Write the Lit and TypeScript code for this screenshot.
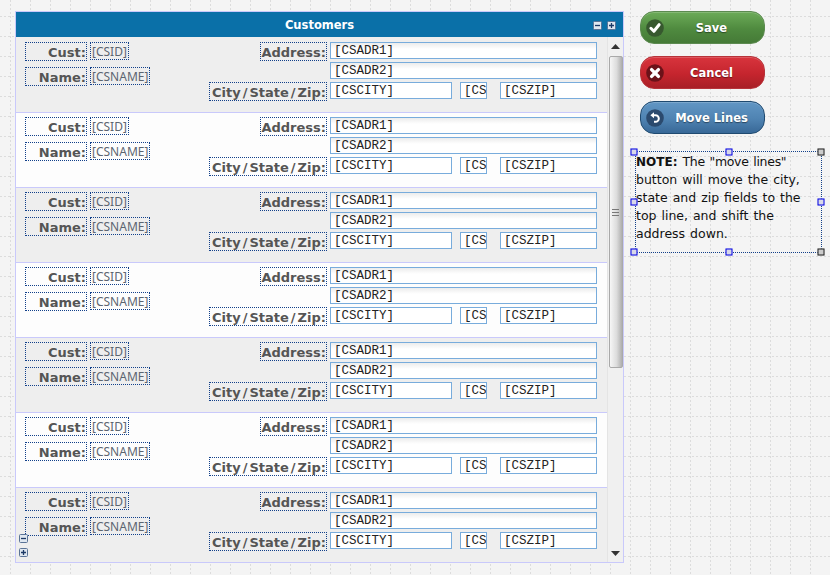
import { LitElement, html, css, svg } from "lit";
import { customElement } from "lit/decorators.js";

const pm = (plus: boolean) => svg`<svg width="9" height="9" viewBox="0 0 9 9"><rect x=".5" y=".5" width="8" height="8" rx="1" fill="#dfe7f0" stroke="#5a7396"/><path d="M2 4.5h5${plus ? "M4.5 2v5" : ""}" stroke="#1d3a66" stroke-width="1.3" fill="none"/></svg>`;

const check = svg`<svg viewBox="0 0 18 18" width="18" height="18"><circle cx="9" cy="9" r="8.8" fill="#37582f"/><path d="M4.9 9.3l3 3 5.2-6.6" fill="none" stroke="#fff" stroke-width="3" stroke-linecap="round" stroke-linejoin="round"/></svg>`;
const cross = svg`<svg viewBox="0 0 18 18" width="18" height="18"><circle cx="9" cy="9" r="8.8" fill="#6b1219"/><path d="M5.6 5.6l6.8 6.8M12.4 5.6l-6.8 6.8" fill="none" stroke="#fff" stroke-width="3.4" stroke-linecap="round"/></svg>`;
const undo = svg`<svg viewBox="0 0 18 18" width="18" height="18"><circle cx="9" cy="9" r="8.8" fill="#2b4a6e"/><path d="M7.5 6.2h2a3.2 3.2 0 0 1 0 6.6H8" fill="none" stroke="#fff" stroke-width="2"/><path d="M8 3.2v6L4.4 6.2z" fill="#fff"/></svg>`;

@customElement("app-root")
export class AppRoot extends LitElement {
  static styles = css`
    :host {
      display: flex;
      align-items: flex-start;
      width: 830px;
      height: 575px;
      box-sizing: border-box;
      padding: 11px 0 0 15px;
      overflow: hidden;
      background-color: #f4f4f4;
      background-image: url("data:image/svg+xml,%3Csvg xmlns='http://www.w3.org/2000/svg' width='20' height='20'%3E%3Cpath d='M10.5 0v20M0 16.5h20' stroke='%23dcdcdc' stroke-dasharray='2 2' fill='none'/%3E%3C/svg%3E");
      font-family: "DejaVu Sans", sans-serif;
    }
    .panel {
      position: relative;
      width: 609px;
      height: 552px;
      box-sizing: border-box;
      border: 1px solid #c9c9fb;
      display: flex;
      flex-direction: column;
      flex: none;
    }
    .title {
      height: 25px;
      flex: none;
      background: #0a70a8;
      color: #fff;
      font: bold 11.5px/26px "DejaVu Sans", sans-serif;
      text-align: center;
      position: relative;
    }
    .tools {
      position: absolute;
      right: 7px;
      top: 9px;
      display: flex;
      gap: 5px;
    }
    .tools svg, .tree svg { display: block; }
    .body { flex: 1; display: flex; min-height: 0; background: #eee; }
    .rows { flex: 1; min-width: 0; padding-top: 1px; overflow: hidden; }
    .row {
      height: 75px;
      box-sizing: border-box;
      border-bottom: 1px solid #c9c9fb;
      background: #fdfdfd;
      padding: 4px 10px 0 9px;
      display: flex;
      justify-content: space-between;
    }
    .row:nth-child(odd) { background: #eeeeee; }
    .row:last-child { border-bottom: 0; }
    .left { display: grid; grid-template-columns: 62px auto; grid-auto-rows: 19px; column-gap: 3px; row-gap: 6px; align-content: start; justify-items: start; }
    .right { display: grid; grid-template-columns: auto 267px; grid-auto-rows: 17px; column-gap: 3px; row-gap: 3px; align-content: start; justify-items: end; }
    .lab {
      box-sizing: border-box;
      height: 19px;
      border: 1px dotted #12408a;
      color: #555;
      font: bold 13px/19px "DejaVu Sans", sans-serif;
      text-align: right;
      padding: 0;
      white-space: nowrap;
    }
    .lab.city { padding-left: 2px; }
    .left .lab { width: 62px; }
    .sl { margin: 0 2px; }
    .val {
      box-sizing: border-box;
      height: 18px;
      border: 1px dotted #12408a;
      color: #5c6570;
      font: 12px/17px "Noto Sans", sans-serif;
      padding: 0 1px;
      white-space: nowrap;
    }
    .span { grid-column: 2; }
    .inp {
      box-sizing: border-box;
      height: 17px;
      border: 1px solid #78acdc;
      background: linear-gradient(#ececec, #fff 6px);
      color: #222;
      font: 12.5px/16px "Liberation Mono", monospace;
      padding: 0 0 0 3px;
      overflow: hidden;
      white-space: nowrap;
      justify-self: stretch;
    }
    .csz { display: flex; justify-self: stretch; }
    .csz .inp { background: #fff; }
    .csz .inp:nth-child(1) { width: 122px; }
    .csz .inp:nth-child(2) { width: 27px; margin-left: 8px; }
    .csz .inp:nth-child(3) { width: 97px; margin-left: 13px; }
    .sb {
      width: 16px;
      flex: none;
      background: #f0f0f0;
      border-left: 1px solid #e4e4e4;
      display: flex;
      flex-direction: column;
      align-items: center;
      box-sizing: border-box;
    }
    .ar { flex: none; height: 19px; width: 100%; display: flex; align-items: center; justify-content: center; }
    .ar.dn { height: 18px; }
    .thumb {
      width: 14px;
      height: 312px;
      flex: none;
      box-sizing: border-box;
      border: 1px solid #a9a9a9;
      border-radius: 2px;
      background: linear-gradient(to right, #f6f6f6, #dcdcdc 55%, #aeaeae);
      display: flex;
      align-items: center;
      justify-content: center;
    }
    .track { flex: 1; }
    .tree { position: absolute; left: 3px; bottom: 5px; display: flex; flex-direction: column; gap: 5px; }
    .side { margin-left: 16px; width: 190px; flex: none; display: flex; flex-direction: column; }
    .btn {
      box-sizing: border-box;
      width: 125px;
      height: 33px;
      border-radius: 14px;
      margin-bottom: 12px;
      padding: 0 5px;
      display: flex;
      align-items: center;
      color: #fff;
      font: bold 11.5px/1 "DejaVu Sans", sans-serif;
      text-shadow: 0 1px 1px rgba(0,0,0,.45);
      box-shadow: inset 0 1px rgba(255,255,255,.18);
    }
    .btn span { flex: 1; text-align: center; padding-top: 2px; }
    .btn svg { flex: none; }
    .save { background: linear-gradient(#6cab58, #4f8a3f 55%, #457a37); border: 1px solid #5c8a50; }
    .cancel { background: linear-gradient(#d8343d, #c5252e 55%, #a81f27); border: 1px solid #b7333a; }
    .move { background: linear-gradient(#6196c4, #4f83b2 55%, #386897); border: 1px solid #1f4a70; }
    .btn.move { margin-bottom: 17px; }
    .note {
      position: relative;
      margin-left: -5px;
      box-sizing: border-box;
      width: 187px;
      height: 102px;
      border: 1px dotted #12408a;
      padding: 1px 0 0 0;
      color: #111;
      font: 12.5px/18px "DejaVu Sans", sans-serif;
      word-spacing: 1px;
      white-space: nowrap;
    }
    .note b { font-weight: bold; font-size: 12px; word-spacing: 0; }
    .tight { letter-spacing: -.3px; }
    .h {
      position: absolute;
      width: 7px;
      height: 7px;
      box-sizing: border-box;
      border: 1px solid #0000e6;
      background: #d8d8e8;
      transform: translate(-50%, -50%);
    }
    .h.k { border-color: #222; background: #ccc; }
    .h.l { left: -2px; }
    .h.c { left: 50%; }
    .h.r { left: 100%; }
    .h.t { top: 0; }
    .h.m { top: 50%; }
    .h.b { top: 100%; }
  `;

  row() {
    return html`<div class="row">
      <div class="left">
        <div class="lab">Cust:</div><div class="val">[CSID]</div>
        <div class="lab">Name:</div><div class="val">[CSNAME]</div>
      </div>
      <div class="right">
        <div class="lab">Address:</div><div class="inp">[CSADR1]</div>
        <div class="inp span">[CSADR2]</div>
        <div class="lab city">City<span class="sl">/</span>State<span class="sl">/</span>Zip:</div>
        <div class="csz"><div class="inp">[CSCITY]</div><div class="inp">[CS</div><div class="inp">[CSZIP]</div></div>
      </div>
    </div>`;
  }

  render() {
    return html`
      <div class="panel">
        <div class="title">Customers<div class="tools">${pm(false)}${pm(true)}</div></div>
        <div class="body">
          <div class="rows">${[0, 1, 2, 3, 4, 5, 6].map(() => this.row())}</div>
          <div class="sb">
            <div class="ar"><svg width="9" height="5"><path d="M4.5 0L9 5H0z" fill="#333"/></svg></div>
            <div class="thumb"><svg width="7" height="7"><path d="M0 .5h7M0 3.5h7M0 6.5h7" stroke="#777"/></svg></div>
            <div class="track"></div>
            <div class="ar dn"><svg width="9" height="5"><path d="M0 0h9L4.5 5z" fill="#333"/></svg></div>
          </div>
        </div>
        <div class="tree">${pm(false)}${pm(true)}</div>
      </div>
      <div class="side">
        <div class="btn save">${check}<span>Save</span></div>
        <div class="btn cancel">${cross}<span>Cancel</span></div>
        <div class="btn move">${undo}<span>Move Lines</span></div>
        <div class="note">
          <b>NOTE:</b> <span class="tight">The "move lines"</span><br>button will move the city,<br>state and zip fields to the<br>top line, and shift the<br>address down.
          <i class="h l t"></i><i class="h c t"></i><i class="h r t k"></i>
          <i class="h l m"></i><i class="h r m"></i>
          <i class="h l b"></i><i class="h c b"></i><i class="h r b k"></i>
        </div>
      </div>
    `;
  }
}
